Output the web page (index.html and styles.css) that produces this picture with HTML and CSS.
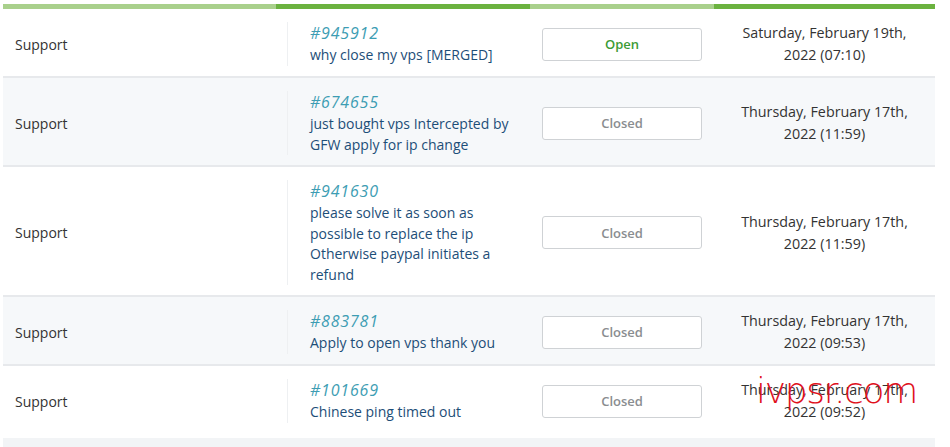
FILE: index.html
```html
<!DOCTYPE html>
<html lang="en">
<head>
<meta charset="utf-8">
<title>Tickets</title>
<link rel="stylesheet" href="styles.css">
</head>
<body>
<div class="page">
  <div class="tickets">
    <div class="bar">
      <span class="seg seg-light c1"></span>
      <span class="seg seg-dark c2"></span>
      <span class="seg seg-light c3"></span>
      <span class="seg seg-dark c4"></span>
    </div>
    <div class="row">
      <div class="cell c1 dept">Support</div>
      <div class="cell c2"><div class="subject"><a class="tid">#945912</a><span class="title">why close my vps [MERGED]</span></div></div>
      <div class="cell c3"><span class="status open">Open</span></div>
      <div class="cell c4 date">Saturday, February 19th, 2022 (07:10)</div>
    </div>
    <div class="row alt">
      <div class="cell c1 dept">Support</div>
      <div class="cell c2"><div class="subject"><a class="tid">#674655</a><span class="title">just bought vps Intercepted by GFW apply for ip change</span></div></div>
      <div class="cell c3"><span class="status">Closed</span></div>
      <div class="cell c4 date">Thursday, February 17th, 2022 (11:59)</div>
    </div>
    <div class="row">
      <div class="cell c1 dept">Support</div>
      <div class="cell c2"><div class="subject"><a class="tid">#941630</a><span class="title">please solve it as soon as possible to replace the ip Otherwise paypal initiates a refund</span></div></div>
      <div class="cell c3"><span class="status">Closed</span></div>
      <div class="cell c4 date">Thursday, February 17th, 2022 (11:59)</div>
    </div>
    <div class="row alt">
      <div class="cell c1 dept">Support</div>
      <div class="cell c2"><div class="subject"><a class="tid">#883781</a><span class="title">Apply to open vps thank you</span></div></div>
      <div class="cell c3"><span class="status">Closed</span></div>
      <div class="cell c4 date">Thursday, February 17th, 2022 (09:53)</div>
    </div>
    <div class="row last">
      <div class="cell c1 dept">Support</div>
      <div class="cell c2"><div class="subject"><a class="tid">#101669</a><span class="title">Chinese ping timed out</span></div></div>
      <div class="cell c3"><span class="status">Closed</span></div>
      <div class="cell c4 date">Thursday, February 17th, 2022 (09:52)</div>
    </div>
    <div class="foot"></div>
  </div>
  <div class="watermark">ivpsr.com</div>
</div>
</body>
</html>
```

FILE: styles.css
```css
html, body {
  margin: 0;
  padding: 0;
  background: #ffffff;
}
body {
  font-family: "Open Sans", "Liberation Sans", sans-serif;
  font-size: 14px;
  color: #333333;
}
.page {
  position: relative;
  width: 950px;
  height: 447px;
  overflow: hidden;
}
.tickets {
  margin-left: 3px;
  padding-top: 4px;
  width: 932px;
}
.bar {
  display: flex;
  height: 5px;
}
.seg { display: block; height: 5px; }
.seg-light { background: #a9d08c; }
.seg-dark { background: #6bb23f; }
.c1 { width: 273px; flex: none; }
.c2 { width: 254px; flex: none; }
.c3 { width: 184px; flex: none; }
.c4 { width: 221px; flex: none; }
.row {
  display: flex;
  align-items: stretch;
  border-bottom: 2px solid #e7e9ec;
  background: #ffffff;
}
.row.alt { background: #f6f8fa; }
.row.last { border-bottom: 0; }
.cell {
  box-sizing: border-box;
  display: flex;
  align-items: center;
  padding: 13px 0 10px;
}
.row.last .cell { padding-bottom: 15px; }
.dept {
  padding-left: 12px;
  color: #333333;
}
.subject {
  margin-left: 11px;
  border-left: 1px solid #eef0f2;
  padding-left: 22px;
  padding-right: 8px;
  display: flex;
  flex-direction: column;
  align-self: stretch;
  justify-content: center;
}
.tid {
  font-style: italic;
  font-size: 16px;
  line-height: 23px;
  color: #3d9db3;
  letter-spacing: 0.8px;
}
.title {
  line-height: 20.5px;
  color: #1d4e78;
}
.c3 { justify-content: center; }
.status {
  box-sizing: border-box;
  width: 160px;
  height: 33px;
  border: 1px solid #cfd2d5;
  border-radius: 3px;
  background: #ffffff;
  display: flex;
  align-items: center;
  justify-content: center;
  font-size: 13px;
  font-weight: 600;
  color: #8a8d90;
}
.status.open { color: #3c9b35; }
.date {
  justify-content: center;
  text-align: center;
  line-height: 22px;
  padding-left: 20px;
  padding-right: 20px;
  font-size: 14.3px;
  color: #333333;
}
.foot {
  height: 12px;
  background: #f2f4f6;
}
.watermark {
  position: absolute;
  left: 756px;
  top: 371px;
  font-family: "DejaVu Sans", sans-serif;
  font-weight: 200;
  font-size: 36px;
  line-height: 40px;
  letter-spacing: -1.3px;
  color: #e0101c;
}
```
